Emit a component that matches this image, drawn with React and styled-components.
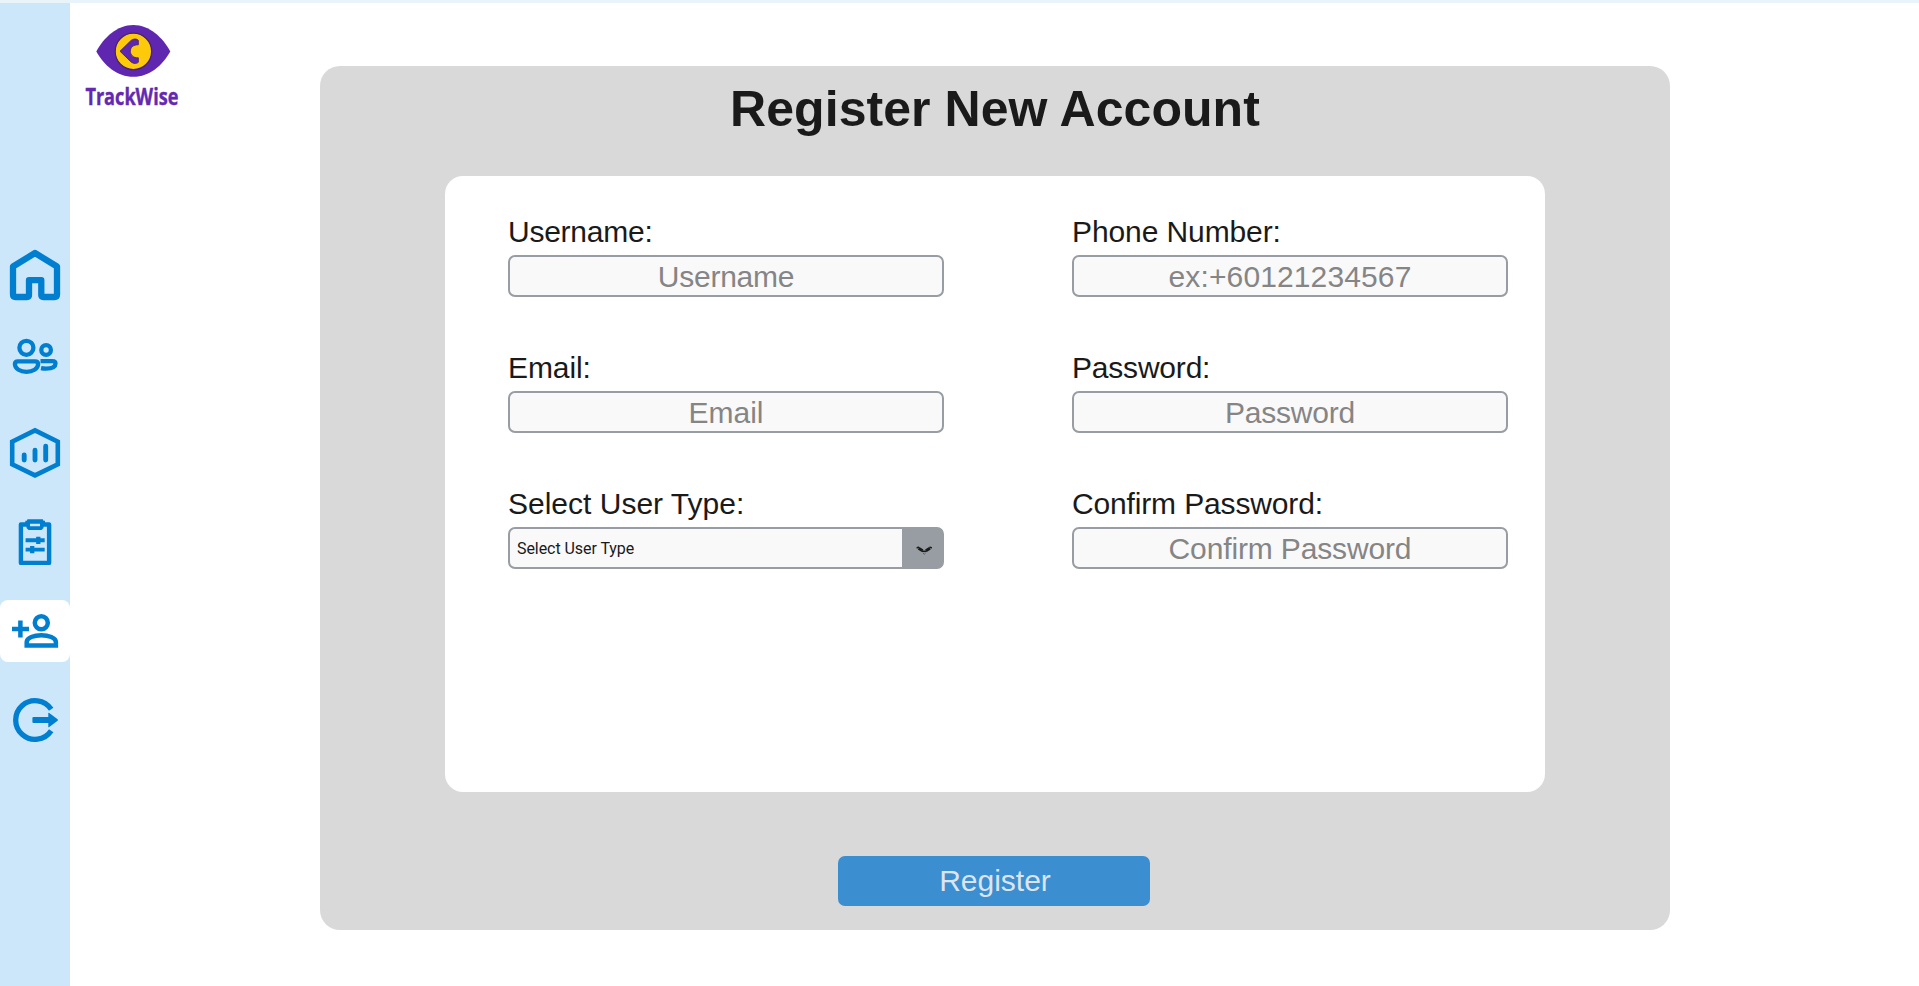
import React from "react";
import styled, { createGlobalStyle } from "styled-components";

const GlobalStyle = createGlobalStyle`
  *, *::before, *::after { box-sizing: border-box; }
  body { margin: 0; background: #ffffff; overflow: hidden; }
`;

const sans = `"Liberation Sans", Arial, sans-serif`;

const Page = styled.div`
  display: flex;
  flex-direction: column;
  height: 100vh;
  font-family: ${sans};
  color: #1a1a1a;
`;

const TopStrip = styled.div`
  flex: none;
  height: 3px;
  background: #e9f4fa;
`;

const Body = styled.div`
  display: flex;
  flex: 1;
  min-height: 0;
  align-items: flex-start;
`;

const Sidebar = styled.nav`
  display: flex;
  flex-direction: column;
  gap: 27px;
  flex: none;
  align-self: stretch;
  width: 70px;
  padding-top: 241px;
  background: #cde7fa;
`;

const NavItem = styled.button`
  display: block;
  width: 70px;
  height: 62px;
  padding: 0;
  border: 0;
  border-radius: 8px;
  background: ${(p) => (p.$active ? "#ffffff" : "transparent")};
`;

const NavIcon = styled.svg`
  display: block;
  width: 70px;
  height: 62px;
  color: #007fd0;
`;

const Brand = styled.div`
  flex: none;
  width: 250px;
  padding: 17px 0 0 10px;
`;

const Logo = styled.svg`
  display: block;
  width: 106px;
  height: 100px;
  overflow: visible;
`;

const Card = styled.main`
  display: flex;
  flex-direction: column;
  align-items: center;
  flex: none;
  width: 1350px;
  height: 864px;
  margin-top: 63px;
  padding-top: 15px;
  border-radius: 20px;
  background: #d9d9d9;
`;

const Title = styled.h1`
  margin: 0 0 39px;
  font-size: 50px;
  line-height: 56px;
  font-weight: 700;
  letter-spacing: 0.05px;
`;

const Panel = styled.form`
  display: grid;
  grid-template-columns: 436px 436px;
  column-gap: 128px;
  row-gap: 54px;
  align-content: start;
  width: 1100px;
  height: 616px;
  padding: 39px 0 0 63px;
  border-radius: 18px;
  background: #ffffff;
`;

const Field = styled.label`
  display: flex;
  flex-direction: column;
  gap: 6px;
`;

const Label = styled.span`
  font-size: 30px;
  line-height: 34px;
  letter-spacing: ${(p) => p.$tracking || 0}px;
`;

const Input = styled.input`
  width: 100%;
  height: 42px;
  padding: 1px 6px 0;
  border: 2px solid #979da2;
  border-radius: 7px;
  background: #f9f9fa;
  font-family: ${sans};
  font-size: 30px;
  letter-spacing: ${(p) => p.$tracking || 0}px;
  text-align: center;
  outline: none;
  &::placeholder { color: #858585; opacity: 1; }
`;

const Select = styled.button`
  display: flex;
  width: 100%;
  height: 42px;
  padding: 0;
  border: 2px solid #979da2;
  border-radius: 7px;
  background: #979da2;
  font-family: Roboto, sans-serif;
  font-size: 16px;
  letter-spacing: -0.06px;
  color: #1a1a1a;
  text-align: left;
`;

const SelectValue = styled.span`
  width: 392px;
  height: 38px;
  padding: 1px 0 0 7px;
  border-radius: 5px 0 0 5px;
  background: #f9f9fa;
  line-height: 38px;
`;

const SelectArrow = styled.svg`
  width: 40px;
  height: 38px;
`;

const Submit = styled.button`
  width: 312px;
  height: 50px;
  margin: 64px 2px 0 0;
  padding: 0 0 0 2px;
  border: 0;
  border-radius: 7px;
  background: #3b8ed0;
  font-family: ${sans};
  font-size: 30px;
  line-height: 50px;
  color: #dce4ee;
`;

const icons = {
  home: (
    <path
      d="M15.500 53H27q2 0 2-2V36.200H41.300V51q0 2 2 2H54.500q2.500 0 2.500-2.500V22.500L35 9L13 22.500V50.500q0 2.500 2.500 2.500Z"
      strokeWidth="6.300"
      strokeLinejoin="round"
    />
  ),
  users: (
    <g strokeWidth="4.300">
      <circle cx="26.400" cy="14.800" r="7" />
      <circle cx="46.100" cy="17" r="4.800" />
      <path d="M18 28.300H35C37.100 28.300 38.100 29.400 38.100 31C38.100 36 32.500 38.800 26.500 38.800S14.900 36 14.900 31C14.900 29.400 15.900 28.300 18 28.300Z" />
      <path d="M40.500 28.200H52.500C54.700 28.200 55.500 29.200 55.500 30.600C55.500 34.400 50.500 35.600 46 35.600C44 35.600 42.500 35.400 41 35.100" />
    </g>
  ),
  chart: (
    <g>
      <path d="M35 8.400L57.800 19.600V42.200L35 53.400L12.200 42.200V19.600Z" strokeWidth="4.600" />
      <path d="M24.200 33V38M35 28.300V38M45.700 24.300V38" strokeWidth="4.900" strokeLinecap="round" />
    </g>
  ),
  clipboard: (
    <g>
      <path d="M27 13.500H20.900V51.900H49.100V13.500H43" strokeWidth="4.400" strokeLinejoin="round" />
      <path
        d="M27.500 8.300H42.800L43.500 9.800H45V14L43.500 15V17L41.500 19H28.500L26.500 17V15L25.300 14V9.800H26.800ZM30 12.800V15.200H40V12.800Z"
        fill="currentColor"
        fillRule="evenodd"
        stroke="none"
      />
      <path d="M25.600 29.300H44.700M25.600 38.600H44.700" strokeWidth="3.900" />
      <path d="M38.300 25.700V32.900M32.200 35V42.200" strokeWidth="4.300" />
    </g>
  ),
  addUser: (
    <g strokeWidth="4.500">
      <circle cx="41.300" cy="22.700" r="6.500" />
      <path d="M12 29H29M20.400 20.400V37.400" />
      <path d="M26.700 45.400V42C26.700 37.800 34 35.200 41.300 35.200S55.900 37.800 55.900 42V45.400Z" />
    </g>
  ),
  logout: (
    <g>
      <path d="M51.200 20.200A19.400 19.400 0 1 0 51.200 41.800" strokeWidth="5.300" />
      <path
        d="M33.500 28H48.300V24.300Q48.300 23.300 49.300 24L57.600 30.300Q58.300 31 57.600 31.700L49.300 38Q48.300 38.700 48.300 37.700V34H33.500Q32.400 34 32.400 33V29Q32.400 28 33.500 28Z"
        fill="currentColor"
        stroke="none"
      />
    </g>
  ),
};

const navItems = [
  { name: "home", label: "Home" },
  { name: "users", label: "Users" },
  { name: "chart", label: "Statistics" },
  { name: "clipboard", label: "Records" },
  { name: "addUser", label: "Register account", active: true },
  { name: "logout", label: "Log out" },
];

function TextField({ label, placeholder, type = "text", labelTracking, tracking }) {
  return (
    <Field>
      <Label $tracking={labelTracking}>{label}</Label>
      <Input type={type} placeholder={placeholder} $tracking={tracking} />
    </Field>
  );
}

function TrackWiseLogo() {
  return (
    <Logo viewBox="80 20 106 100">
      <path
        d="M96.300 51.400C104 37.400 117 25 133.300 25S162.500 37.400 170.300 51.400C162.500 65.400 149.500 76.700 133.300 76.700S104 65.400 96.300 51.400Z"
        fill="#5f27b0"
      />
      <circle cx="133.400" cy="51.400" r="18.200" fill="#fdc90b" stroke="#48206f" strokeWidth="1.200" />
      <path
        d="M120 51.200L130.500 41C133 38.500 136.500 38.500 138.300 40.300V44.800C133.500 44.500 130.300 47.500 130.300 51.200S133.500 58.200 138.300 57.800V62.300C136.500 64 133 63.800 130.500 61.400Z"
        fill="#5f27b0"
        stroke="#48206f"
        strokeWidth="0.900"
        strokeLinejoin="round"
      />
      <text
        x="85.400"
        y="105"
        textLength="93"
        lengthAdjust="spacingAndGlyphs"
        fontFamily="'Open Sans', 'Noto Sans', sans-serif"
        fontWeight="700"
        fontSize="23"
        fill="#6429b0"
        stroke="#6429b0"
        strokeWidth="0.400"
      >
        TrackWise
      </text>
    </Logo>
  );
}

export default function App() {
  return (
    <Page>
      <GlobalStyle />
      <TopStrip />
      <Body>
        <Sidebar>
          {navItems.map((item) => (
            <NavItem key={item.name} $active={item.active} aria-label={item.label}>
              <NavIcon viewBox="0 0 70 62" fill="none" stroke="currentColor">
                {icons[item.name]}
              </NavIcon>
            </NavItem>
          ))}
        </Sidebar>
        <Brand>
          <TrackWiseLogo />
        </Brand>
        <Card>
          <Title>Register New Account</Title>
          <Panel>
            <TextField label="Username:" placeholder="Username" labelTracking={-0.25} tracking={-0.25} />
            <TextField label="Phone Number:" placeholder="ex:+60121234567" labelTracking={-0.1} tracking={0.12} />
            <TextField label="Email:" placeholder="Email" labelTracking={-0.1} />
            <TextField label="Password:" placeholder="Password" type="password" labelTracking={-0.2} tracking={-0.2} />
            <Field as="div">
              <Label>Select User Type:</Label>
              <Select type="button">
                <SelectValue>Select User Type</SelectValue>
                <SelectArrow viewBox="0 0 40 38" fill="none" stroke="#1a1a1a">
                  <path d="M15.200 18.700L16.500 18.300M28 18.300L29.300 18.700" strokeWidth="1.500" strokeLinecap="round" />
                  <path d="M16.600 19.300L20.600 21.800M27.900 19.300L23.900 21.800" strokeWidth="3" />
                  <path d="M20 22.300H24.500" strokeWidth="1.600" />
                  <path d="M21 24.200L22.300 25.200L23.600 24.200" strokeWidth="0.900" opacity="0.500" />
                </SelectArrow>
              </Select>
            </Field>
            <TextField
              label="Confirm Password:"
              placeholder="Confirm Password"
              type="password"
              labelTracking={-0.15}
              tracking={-0.14}
            />
          </Panel>
          <Submit type="button">Register</Submit>
        </Card>
      </Body>
    </Page>
  );
}
